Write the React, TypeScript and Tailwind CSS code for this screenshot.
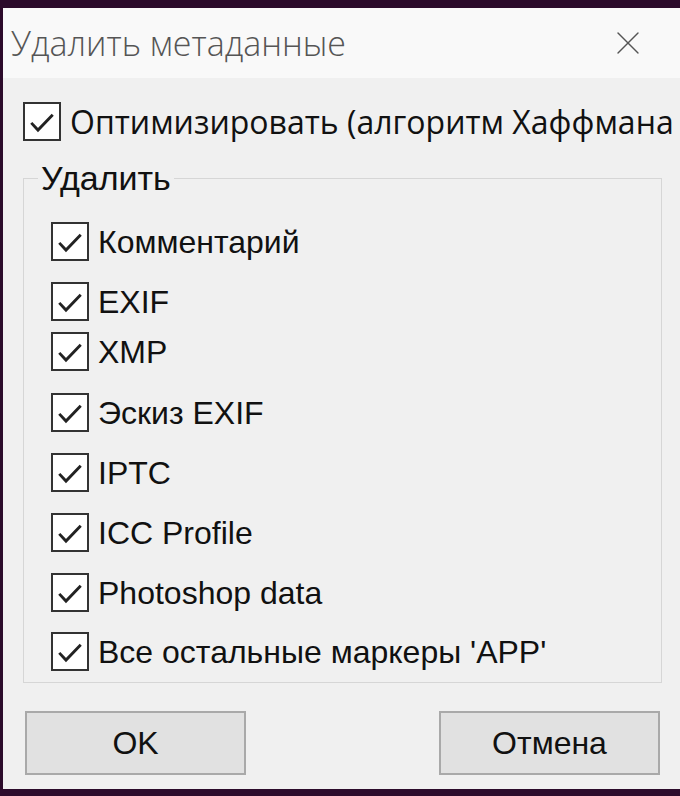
import { X } from "lucide-react";

type Item = { label: string; gap: string };

const items: Item[] = [
  { label: "Комментарий", gap: "mt-[27px]" },
  { label: "EXIF", gap: "mt-[21px]" },
  { label: "XMP", gap: "mt-[11px]" },
  { label: "Эскиз EXIF", gap: "mt-[22px]" },
  { label: "IPTC", gap: "mt-[21px]" },
  { label: "ICC Profile", gap: "mt-[21px]" },
  { label: "Photoshop data", gap: "mt-[21px]" },
  { label: "Все остальные маркеры 'APP'", gap: "mt-[20px]" },
];

function Check() {
  return (
    <span className="flex h-[39px] w-[38px] shrink-0 items-center justify-center border-2 border-[#333] bg-white">
      <svg viewBox="0 0 38 38" className="h-[36px] w-[36px]">
        <path d="M7 20 L14.5 28 L31 11" fill="none" stroke="#222" strokeWidth="3.2" />
      </svg>
    </span>
  );
}

function Row({ label, gap }: Item) {
  return (
    <div className={`${gap} flex items-center gap-[9px] text-[32px] leading-none text-[#111]`}>
      <Check />
      <span>{label}</span>
    </div>
  );
}

export default function App() {
  return (
    <div className="flex h-[796px] w-[680px] flex-col overflow-hidden bg-[#2c0b2b] pt-[8px] pb-[7px] pl-[3px] font-['Liberation_Sans',Arial,sans-serif]">
      <div className="flex h-[70px] shrink-0 items-center justify-between bg-[#f9f9f9] pl-[8px] pr-[32px]">
        <span className="font-['Open_Sans',sans-serif] text-[34px] font-light text-[#555]">Удалить метаданные</span>
        <X className="h-[40px] w-[40px] text-[#555]" strokeWidth={0.8} />
      </div>

      <div className="flex flex-1 flex-col overflow-hidden whitespace-nowrap bg-[#f0f0f0]">
        <div className="mt-[24px] ml-[20px] flex items-center gap-[9px] font-['Open_Sans',sans-serif] text-[32px] leading-none text-[#111]">
          <Check />
          <span>Оптимизировать (алгоритм Хаффмана</span>
        </div>

        <fieldset className="mt-[20px] ml-[20px] h-[522px] w-[639px] border border-[#d6d6d6] pl-[27px]">
          <legend className="ml-[-13px] px-[3px] text-[34px] leading-none text-[#111]">Удалить</legend>
          {items.map((it) => (
            <Row key={it.label} {...it} />
          ))}
        </fieldset>

        <div className="mt-[28px] flex gap-[193px] pl-[22px] text-[32px] text-[#111]">
          <button className="flex h-[64px] w-[221px] items-center justify-center border-2 border-[#a9a9a9] bg-[#e1e1e1]">
            OK
          </button>
          <button className="flex h-[64px] w-[221px] items-center justify-center border-2 border-[#a9a9a9] bg-[#e1e1e1]">
            Отмена
          </button>
        </div>
      </div>
    </div>
  );
}
